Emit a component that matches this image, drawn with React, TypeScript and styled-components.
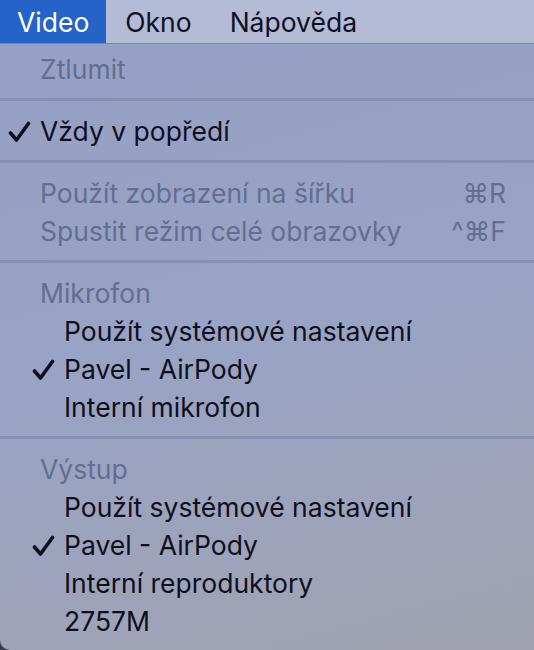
import React from 'react';
import styled, { createGlobalStyle } from 'styled-components';

const GlobalStyle = createGlobalStyle`
  html, body {
    margin: 0;
    padding: 0;
    background: #3a3d48;
  }
  body {
    font-family: Inter, "Noto Sans", "Liberation Sans", sans-serif;
    -webkit-font-smoothing: antialiased;
  }
`;

const Screen = styled.div`
  width: 534px;
  height: 650px;
  display: flex;
  flex-direction: column;
  overflow: hidden;
`;

const MenuBar = styled.div`
  height: 43px;
  display: flex;
  align-items: stretch;
  background: #b4bbd7;
  border-bottom: 1px solid #7d86a6;
`;

const BarItem = styled.div<{ active?: boolean }>`
  display: flex;
  align-items: center;
  padding: 0 ${p => (p.active ? 17 : 19)}px;
  font-size: 26.5px;
  color: ${p => (p.active ? '#ffffff' : '#0e1022')};
  background: ${p => (p.active ? '#2563c9' : 'transparent')};
`;

const Dropdown = styled.div`
  flex: 1;
  display: flex;
  flex-direction: column;
  padding: 6px 0 8px;
  background: linear-gradient(165deg, #95a0c4 0%, #99a3c5 45%, #9ea3b9 80%, #a0a2ae 100%);
  border-bottom-left-radius: 10px;
`;

const Item = styled.div<{ indent?: number; disabled?: boolean }>`
  height: 38px;
  display: flex;
  align-items: center;
  padding-left: ${p => 8 + (p.indent || 0) * 24}px;
  padding-right: 28px;
  font-size: 26.5px;
  color: ${p => (p.disabled ? '#636e91' : '#0d0f1c')};
  white-space: nowrap;
`;

const CheckCell = styled.div`
  width: 32px;
  flex: none;
  display: flex;
  align-items: center;
`;

const Label = styled.span`
  flex: 1;
`;

const Shortcut = styled.span`
  color: #636e91;
`;

const Separator = styled.div`
  height: 3px;
  margin: 10px 0 11px;
  background: #8790b3;
`;

const Check = () => (
  <svg width="23" height="21" viewBox="0 0 23 21">
    <path
      d="M2.5 12 L8.5 19 L20.5 2.5"
      fill="none"
      stroke="#0d0f1c"
      strokeWidth="3.6"
      strokeLinecap="round"
      strokeLinejoin="round"
    />
  </svg>
);

type Entry = {
  label: string;
  indent?: number;
  checked?: boolean;
  disabled?: boolean;
  shortcut?: string;
};

const sections: Entry[][] = [
  [{ label: 'Ztlumit', disabled: true }],
  [{ label: 'Vždy v popředí', checked: true }],
  [
    { label: 'Použít zobrazení na šířku', disabled: true, shortcut: '⌘R' },
    { label: 'Spustit režim celé obrazovky', disabled: true, shortcut: '^⌘F' },
  ],
  [
    { label: 'Mikrofon', disabled: true },
    { label: 'Použít systémové nastavení', indent: 1 },
    { label: 'Pavel - AirPody', indent: 1, checked: true },
    { label: 'Interní mikrofon', indent: 1 },
  ],
  [
    { label: 'Výstup', disabled: true },
    { label: 'Použít systémové nastavení', indent: 1 },
    { label: 'Pavel - AirPody', indent: 1, checked: true },
    { label: 'Interní reproduktory', indent: 1 },
    { label: '2757M', indent: 1 },
  ],
];

const App: React.FC = () => {
  return (
    <>
      <GlobalStyle />
      <Screen>
        <MenuBar>
          <BarItem active>Video</BarItem>
          <BarItem>Okno</BarItem>
          <BarItem>Nápověda</BarItem>
        </MenuBar>
        <Dropdown>
          {sections.map((section, si) => (
            <React.Fragment key={si}>
              {si > 0 && <Separator />}
              {section.map((entry, ei) => (
                <Item key={ei} indent={entry.indent} disabled={entry.disabled}>
                  <CheckCell>{entry.checked && <Check />}</CheckCell>
                  <Label>{entry.label}</Label>
                  {entry.shortcut && <Shortcut>{entry.shortcut}</Shortcut>}
                </Item>
              ))}
            </React.Fragment>
          ))}
        </Dropdown>
      </Screen>
    </>
  );
};

export default App;
